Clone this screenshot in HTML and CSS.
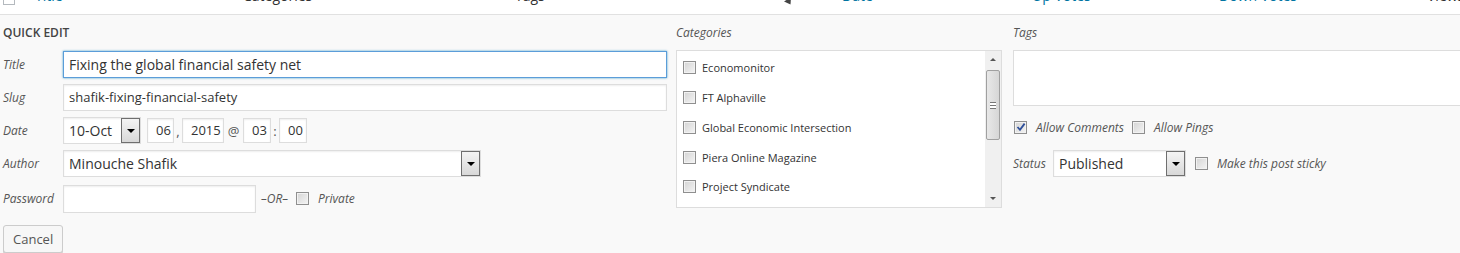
FILE: index.html
```html
<!DOCTYPE html>
<html>
<head>
    <meta charset="UTF-8">
    <title>Quick Edit</title>
    <link rel="stylesheet" href="styles.css">
</head>
<body>
<div class="list-head">
    <div class="head-inner">
        <span class="col col-cb"><span class="head-cb"></span></span>
        <span class="col col-title link">Title</span>
        <span class="col col-cats">Categories</span>
        <span class="col col-tags">Tags</span>
        <span class="col col-sort"><span class="sort-arrow"></span></span>
        <span class="col col-date link">Date</span>
        <span class="col col-up link">Up Votes</span>
        <span class="col col-down link">Down Votes</span>
        <span class="col col-views">Views</span>
    </div>
</div>

<section class="quick-edit">
    <div class="edit-cols">
        <div class="col-left">
            <h4>Quick Edit</h4>

            <div class="field">
                <span class="label">Title</span>
                <div class="input focus">Fixing the global financial safety net</div>
            </div>

            <div class="field">
                <span class="label">Slug</span>
                <div class="input">shafik-fixing-financial-safety</div>
            </div>

            <div class="field">
                <span class="label">Date</span>
                <div class="select month">10-Oct<span class="drop"><span class="tri"></span></span></div>
                <div class="input small day">06</div>
                <span class="sep">,</span>
                <div class="input small year">2015</div>
                <span class="sep at">@</span>
                <div class="input small hour">03</div>
                <span class="sep">:</span>
                <div class="input small min">00</div>
            </div>

            <div class="field">
                <span class="label">Author</span>
                <div class="select author">Minouche Shafik<span class="drop"><span class="tri"></span></span></div>
            </div>

            <div class="field field-pass">
                <span class="label">Password</span>
                <div class="input pass"></div>
                <em class="or">&ndash;OR&ndash;</em>
                <span class="cb"></span>
                <em class="check-label">Private</em>
            </div>

            <div class="buttons">
                <button class="button">Cancel</button>
            </div>
        </div>

        <div class="col-center">
            <span class="label top">Categories</span>
            <div class="cat-box">
                <ul class="cat-list">
                    <li><span class="cb"></span>Economonitor</li>
                    <li><span class="cb"></span>FT Alphaville</li>
                    <li><span class="cb"></span>Global Economic Intersection</li>
                    <li><span class="cb"></span>Piera Online Magazine</li>
                    <li><span class="cb"></span>Project Syndicate</li>
                </ul>
                <div class="scrollbar">
                    <span class="arrow up"></span>
                    <span class="thumb"><span class="grip"></span></span>
                    <span class="arrow down"></span>
                </div>
            </div>
        </div>

        <div class="col-right">
            <span class="label top">Tags</span>
            <div class="tags"></div>

            <div class="checks">
                <span class="cb checked">
                    <svg width="10" height="10" viewBox="0 0 10 10"><path d="M1.5 5 L4 7.8 L8.6 1.6" fill="none" stroke="#2e4f9a" stroke-width="1.8"/></svg>
                </span>
                <em class="check-label">Allow Comments</em>
                <span class="cb"></span>
                <em class="check-label">Allow Pings</em>
            </div>

            <div class="status-row">
                <span class="label">Status</span>
                <div class="select status">Published<span class="drop"><span class="tri"></span></span></div>
                <span class="cb"></span>
                <em class="check-label">Make this post sticky</em>
            </div>
        </div>
    </div>
</section>
</body>
</html>
```

FILE: styles.css
```css
html, body {
    margin: 0;
    height: 100%;
}

body {
    font-family: "Open Sans", "Liberation Sans", sans-serif;
    color: #333333;
    background-color: #f9f9f9;
    overflow: hidden;
}

/* cut-off table header */

.list-head {
    height: 14px;
    overflow: hidden;
    background-color: #ffffff;
    border-bottom: 1px solid #e1e1e1;
}

.head-inner {
    display: flex;
    align-items: center;
    margin-top: -15px;
    height: 20px;
    font-size: 14px;
    white-space: nowrap;
}

.col {
    display: block;
    flex: none;
}

.link {
    color: #0074a2;
}

.col-cb { width: 35px; padding-left: 3px; box-sizing: border-box; }
.col-title { width: 208px; }
.col-cats { width: 272px; }
.col-tags { width: 270px; }
.col-sort { width: 57px; }
.col-date { width: 190px; }
.col-up { width: 187px; }
.col-down { width: 208px; }

.head-cb {
    display: block;
    width: 12px;
    height: 14px;
    border: 1px solid #b4b9be;
    box-sizing: border-box;
    margin-top: 6px;
}

.sort-arrow {
    display: block;
    width: 0;
    height: 0;
    margin-top: 14px;
    border-left: 4px solid transparent;
    border-right: 4px solid transparent;
    border-top: 6px solid #444444;
    transform: rotate(-30deg);
}

/* quick edit */

.edit-cols {
    display: flex;
}

.col-left {
    width: 667px;
    flex: none;
    padding-left: 3px;
    box-sizing: border-box;
}

.col-center {
    width: 337px;
    flex: none;
    padding-left: 9px;
    box-sizing: border-box;
}

.col-right {
    flex: 1;
    padding-left: 9px;
    min-width: 0;
}

h4 {
    margin: 8px 0 0;
    height: 20px;
    line-height: 20px;
    font-size: 12px;
    font-weight: 600;
    text-transform: uppercase;
    color: #444444;
}

.label {
    display: block;
    width: 60px;
    flex: none;
    font-size: 12px;
    font-style: italic;
    color: #555555;
}

.label.top {
    height: 33px;
    line-height: 32px;
    margin-top: 2px;
}

.field {
    display: flex;
    align-items: center;
    height: 27px;
    margin-top: 6px;
}

.field:first-of-type {
    margin-top: 8px;
}

.field-pass {
    margin-top: 8px;
}

.input,
.select {
    box-sizing: border-box;
    height: 27px;
    line-height: 25px;
    padding: 0 5px;
    font-size: 13px;
    color: #333333;
    background-color: #ffffff;
    border: 1px solid #dddddd;
    box-shadow: inset 0 1px 2px rgba(0, 0, 0, 0.07);
    white-space: nowrap;
}

.input.focus {
    border-color: #5b9dd9;
    box-shadow: 0 0 2px rgba(30, 140, 190, 0.8);
    flex: 1;
    font-size: 14px;
}

.field .input:not(.small):not(.pass) {
    flex: 1;
}

.small {
    height: 25px;
    line-height: 23px;
    font-size: 13px;
    padding: 0 0 0 8px;
}

.day { width: 27px; margin-left: 6px; }
.year { width: 42px; }
.hour { width: 28px; }
.min { width: 28px; }

.sep {
    width: 8px;
    text-align: center;
    font-size: 13px;
    color: #555555;
}

.sep.at {
    width: 19px;
}

.select {
    position: relative;
    padding-right: 24px;
}

.month { width: 78px; font-size: 14px; }
.author { width: 418px; font-size: 14px; }
.status { width: 133px; font-size: 14px; }

.drop {
    position: absolute;
    top: 0;
    right: 0;
    width: 19px;
    height: 25px;
    box-sizing: border-box;
    border: 1px solid #6f6f6f;
    background: linear-gradient(#f4f4f4, #d8d8d8);
    display: flex;
    align-items: center;
    justify-content: center;
}

.tri {
    width: 0;
    height: 0;
    border-left: 4px solid transparent;
    border-right: 4px solid transparent;
    border-top: 4px solid #000000;
}

.pass {
    width: 193px;
    height: 28px;
}

.or {
    margin-left: 5px;
    font-size: 12px;
    color: #555555;
}

.cb {
    display: inline-block;
    flex: none;
    width: 13px;
    height: 13px;
    box-sizing: border-box;
    border: 1px solid #8f8f8f;
    background: linear-gradient(135deg, #d4d4d4, #f4f4f4);
    box-shadow: inset 0 0 0 1px #f2f2f2;
    vertical-align: middle;
}

.field-pass .cb {
    margin-left: 8px;
}

.check-label {
    margin-left: 9px;
    font-size: 12px;
    color: #555555;
}

.buttons {
    margin-top: 13px;
}

.button {
    height: 28px;
    padding: 0 9px;
    font-family: inherit;
    font-size: 13px;
    color: #555555;
    background-color: #f7f7f7;
    border: 1px solid #cccccc;
    border-radius: 3px;
    box-shadow: 0 1px 0 #cccccc;
}

/* categories */

.cat-box {
    display: flex;
    width: 326px;
    height: 158px;
    box-sizing: border-box;
    border: 1px solid #dddddd;
    background-color: #ffffff;
}

.cat-list {
    flex: 1;
    list-style: none;
    margin: 0;
    padding: 2px 0 0 6px;
}

.cat-list li {
    display: flex;
    align-items: center;
    height: 29.75px;
    font-size: 11px;
    color: #333333;
}

.cat-list .cb {
    margin-right: 6px;
}

.scrollbar {
    display: flex;
    flex-flow: column;
    width: 16px;
    flex: none;
    background-color: #f0f0f0;
}

.arrow {
    display: block;
    height: 17px;
    position: relative;
}

.arrow::after {
    content: "";
    position: absolute;
    left: 5px;
    top: 7px;
    border-left: 3px solid transparent;
    border-right: 3px solid transparent;
}

.arrow.up::after {
    border-bottom: 3px solid #555555;
}

.arrow.down {
    margin-top: auto;
}

.arrow.down::after {
    border-top: 3px solid #555555;
}

.thumb {
    display: flex;
    align-items: center;
    justify-content: center;
    height: 70px;
    margin: 2px 1px 0;
    box-sizing: border-box;
    border: 1px solid #a0a0a0;
    border-radius: 2px;
    background: linear-gradient(90deg, #e8e8e8, #d6d6d6);
}

.grip {
    width: 6px;
    height: 5px;
    border-top: 1px solid #777777;
    border-bottom: 1px solid #777777;
    background: linear-gradient(#ffffff 40%, #777777 40%, #777777 60%, #ffffff 60%);
}

/* tags / options */

.tags {
    height: 56px;
    box-sizing: border-box;
    margin-right: -20px;
    border: 1px solid #dddddd;
    background-color: #ffffff;
}

.checks {
    display: flex;
    align-items: center;
    height: 14px;
    margin-top: 14px;
    padding-left: 1px;
}

.checks .cb + .check-label + .cb {
    margin-left: 8px;
}

.cb.checked {
    display: flex;
    align-items: center;
    justify-content: center;
}

.status-row {
    display: flex;
    align-items: center;
    margin-top: 16px;
}

.status-row .label {
    width: 40px;
}

.status-row .cb {
    margin-left: 9px;
}
```
